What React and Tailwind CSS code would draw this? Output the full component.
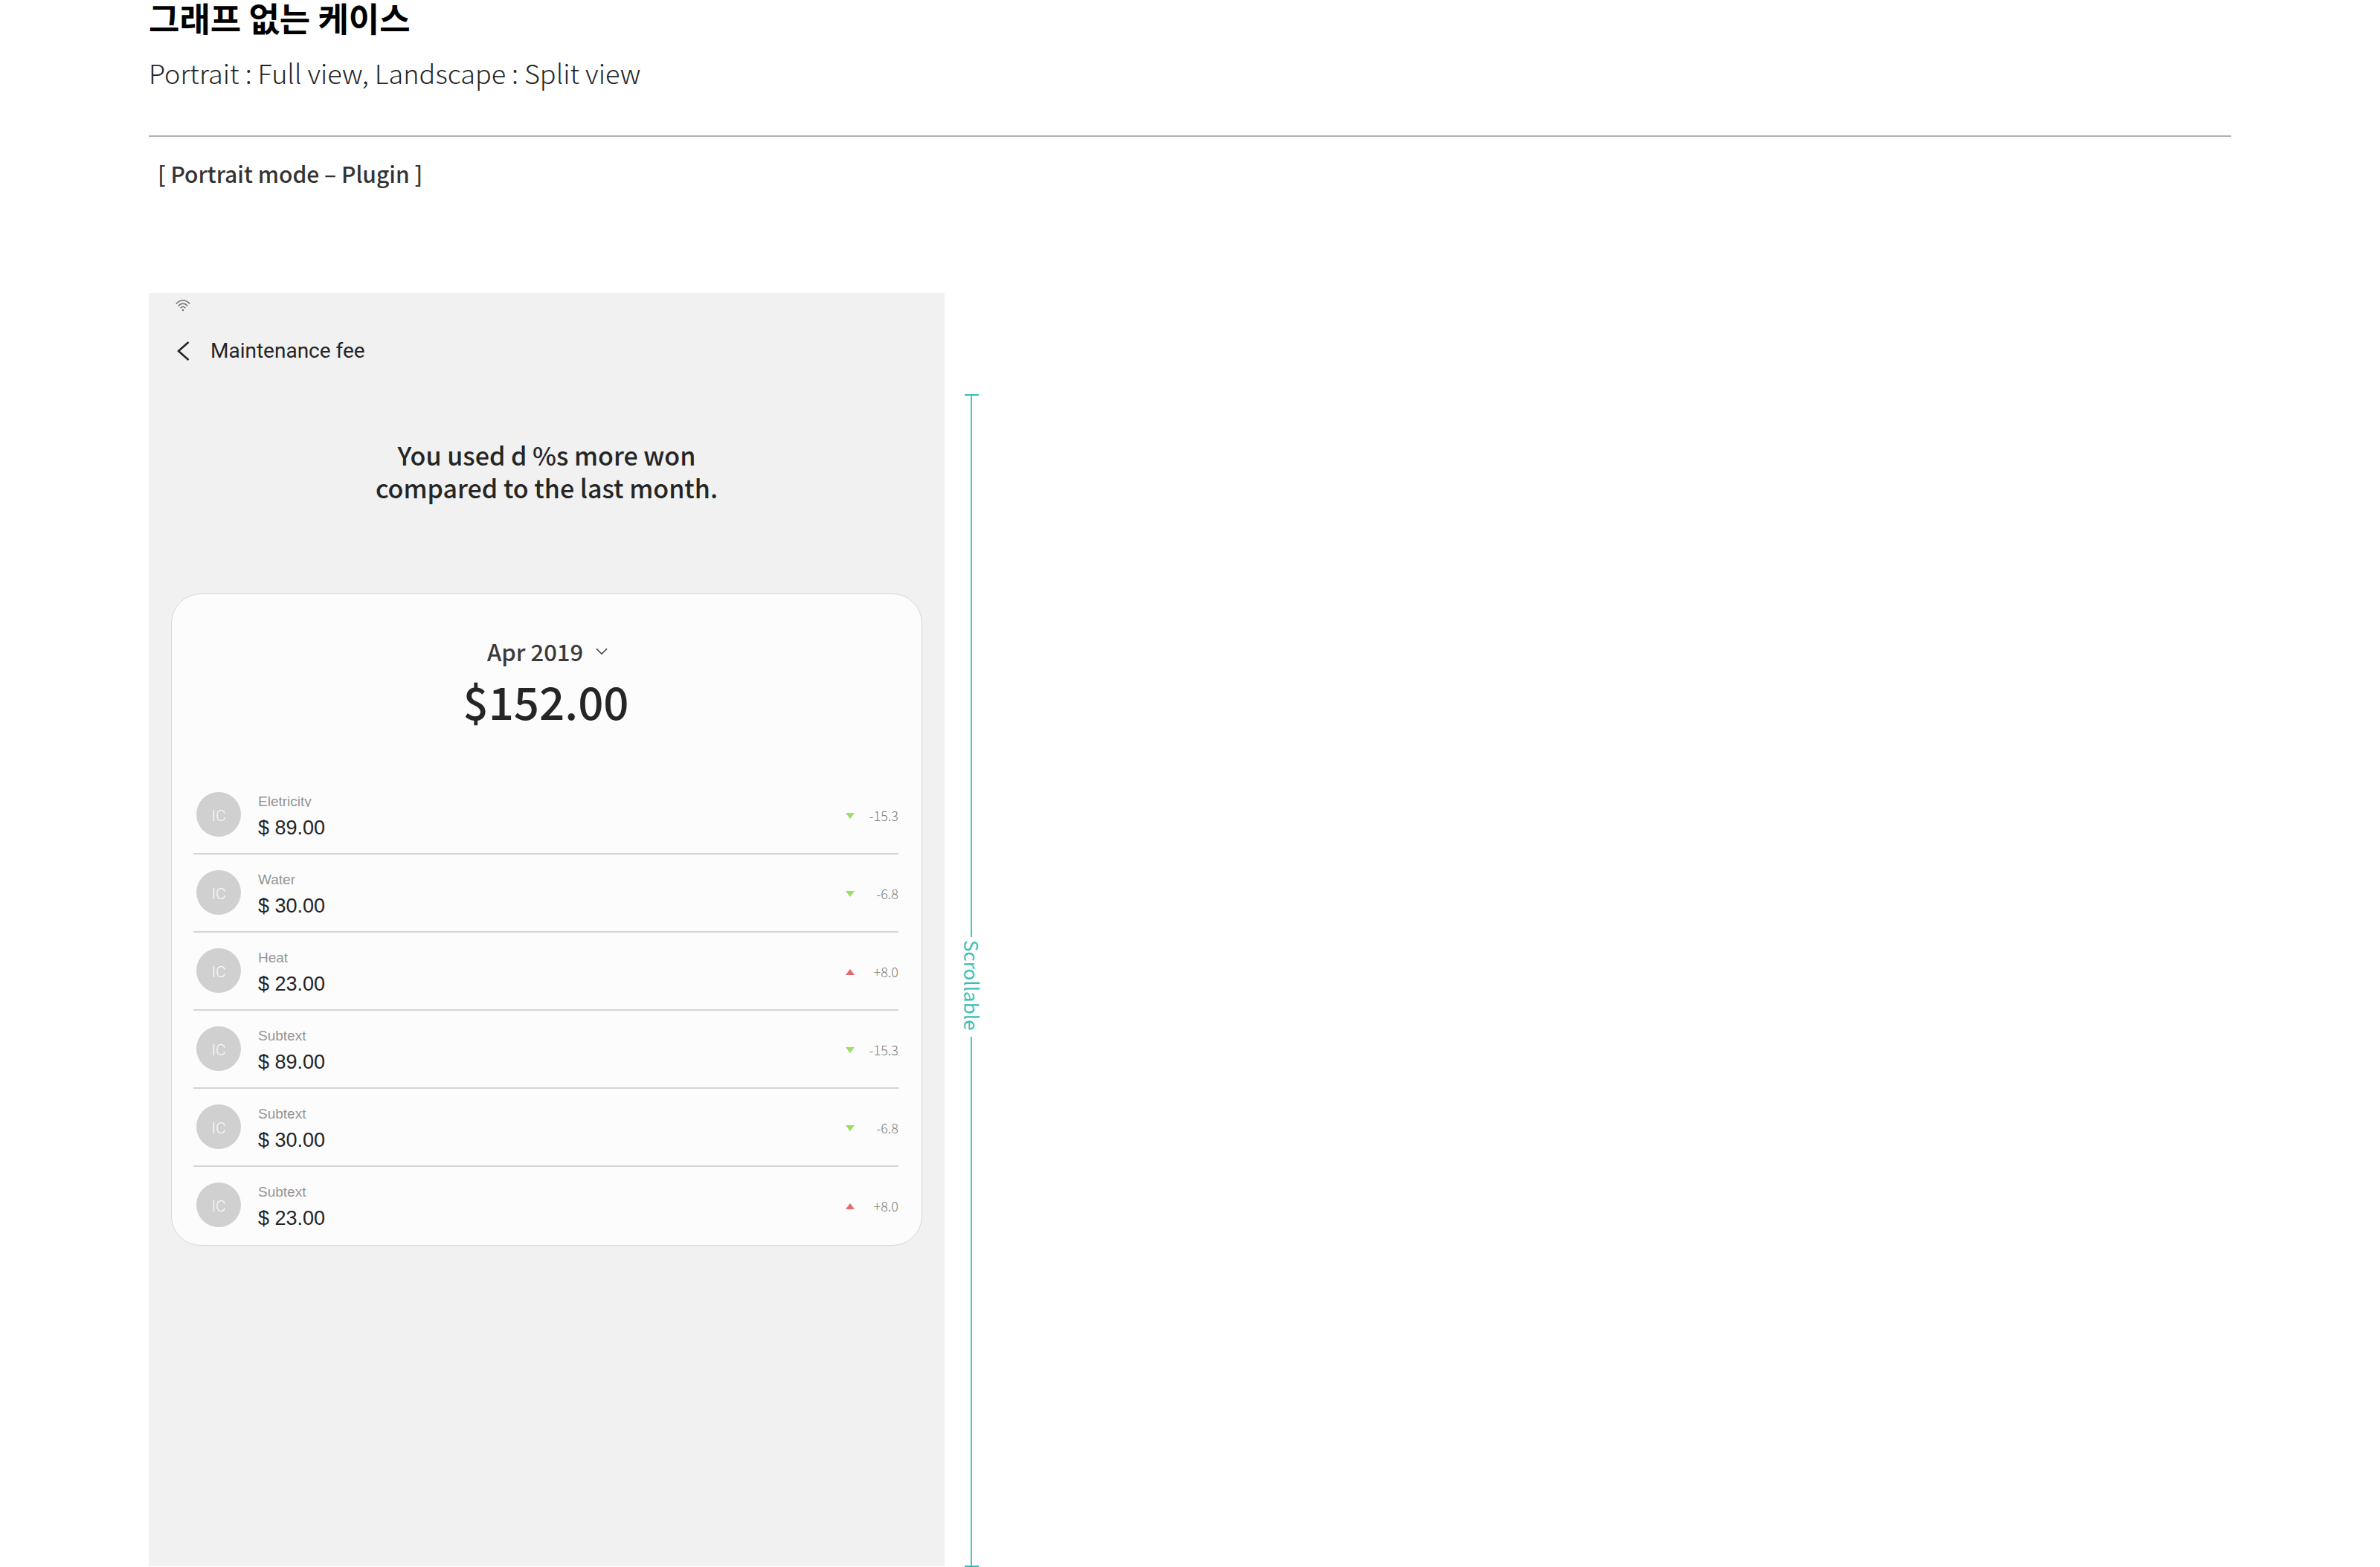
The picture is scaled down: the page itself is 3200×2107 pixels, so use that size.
const fees = [
  { label: "Eletricity", amount: "$ 89.00", change: "-15.3" },
  { label: "Water", amount: "$ 30.00", change: "-6.8" },
  { label: "Heat", amount: "$ 23.00", change: "+8.0" },
  { label: "Subtext", amount: "$ 89.00", change: "-15.3" },
  { label: "Subtext", amount: "$ 30.00", change: "-6.8" },
  { label: "Subtext", amount: "$ 23.00", change: "+8.0" },
];

function WifiIcon() {
  return (
    <svg className="block h-4 w-5" viewBox="0 0 20 16" fill="none" stroke="#737373" strokeWidth="1.5" aria-hidden="true">
      <path d="M.8 5.6C6-.4 14-.4 19.2 5.6" />
      <path d="M3.7 8.5C7.4 4.3 12.6 4.3 16.3 8.5" />
      <path d="M6.6 11.2C8.7 9 11.3 9 13.4 11.2" />
      <circle cx="10" cy="14" r="1.2" fill="#737373" stroke="none" />
    </svg>
  );
}

function Trend({ up }) {
  return (
    <svg className="mt-px block h-2 w-3" viewBox="0 0 12 8" aria-hidden="true">
      {up ? <path d="M0 8 6 0l6 8z" fill="#e76b6b" /> : <path d="M0 0h12L6 8z" fill="#98e060" />}
    </svg>
  );
}

function FeeRow({ label, amount, change }) {
  return (
    <li className="flex h-[105px] items-start border-b-2 border-[#d4d4d4] last:border-transparent">
      <span className="mt-[21px] ml-1 flex size-[60px] shrink-0 items-center justify-center rounded-full bg-[#d0d0d0] pt-1 font-['Roboto',sans-serif] text-[21px] leading-6 font-light text-[#fafafa]">
        IC
      </span>
      <span className="mt-5 ml-[23px] flex grow flex-col font-['Liberation_Sans',sans-serif]">
        <span className="h-[21px] overflow-hidden text-[19px] leading-7 text-[#949494]">{label}</span>
        <span className="mt-3 text-[27px] leading-8 text-[#252525]">{amount}</span>
      </span>
      <span className="mt-10 flex items-center">
        <Trend up={change.startsWith("+")} />
        <span className="w-[59px] text-right font-['Noto_Sans_CJK_KR',sans-serif] text-[18px] leading-6 font-light text-[#7d7d7d]">
          {change}
        </span>
      </span>
    </li>
  );
}

function ScrollGuide() {
  return (
    <div className="mt-[136px] flex w-[22px] flex-col items-center text-[#36bfb5]">
      <span className="h-0.5 w-[19px] bg-[#36bfb5]" />
      <span className="h-[728px] w-0.5 bg-[#4cc6bd]" />
      <span className="mt-1 mb-2 pl-0.5 font-['Noto_Sans_CJK_KR',sans-serif] text-[26px] leading-6 whitespace-nowrap [writing-mode:vertical-rl]">
        Scrollable
      </span>
      <span className="w-0.5 grow bg-[#4cc6bd]" />
      <span className="h-0.5 w-[19px] bg-[#36bfb5]" />
    </div>
  );
}

export default function App() {
  return (
    <main className="flex min-h-screen flex-col bg-white px-[200px] font-['Noto_Sans_CJK_KR',sans-serif]">
      <header className="flex h-[184px] flex-col border-b-2 border-[#b0b0b0]">
        <h1 className="text-[45px] leading-[48px] font-bold text-black">그래프 없는 케이스</h1>
        <p className="mt-[23px] text-[36px] leading-[52px] font-light text-[#252525]">
          Portrait : Full view, Landscape : Split view
        </p>
      </header>
      <h2 className="mt-[27px] pl-3 text-[30px] leading-[44px] font-medium text-[#333333]">[ Portrait mode – Plugin ]</h2>

      <div className="mt-[139px] flex grow items-stretch gap-[25px]">
        <section className="mb-px flex w-full max-w-[1070px] flex-col bg-[#f1f1f1] px-[30px]">
          <div className="pt-[9px] pl-[6px]">
            <WifiIcon />
          </div>
          <nav className="mt-[35px] flex items-center pl-2">
            <button type="button" aria-label="Back" className="block">
              <svg className="block h-7 w-[17px]" viewBox="0 0 17 28" fill="none" stroke="#252525" strokeWidth="2.6" aria-hidden="true">
                <path d="M15.5 2 2 14l13.5 12" />
              </svg>
            </button>
            <h3 className="ml-7 font-['Roboto',sans-serif] text-[28px] leading-9 text-[#252525]">Maintenance fee</h3>
          </nav>
          <p className="mt-[100px] text-center text-[34px] leading-[44px] font-medium text-[#252525]">
            You used d %s more won
            <br />
            compared to the last month.
          </p>

          <article className="mt-[120px] flex flex-col rounded-[40px] border border-[#d8d8d8] bg-[#fcfcfc] pr-[31px] pl-[29px]">
            <div className="mt-[53px] flex items-center justify-center gap-4 pl-1">
              <select
                aria-label="Month"
                className="appearance-none bg-transparent text-[31px] leading-[48px] font-medium text-[#3a3a3a]"
              >
                <option>Apr 2019</option>
              </select>
              <svg className="block h-2.5 w-4" viewBox="0 0 16 10" fill="none" stroke="#3a3a3a" strokeWidth="1.6" aria-hidden="true">
                <path d="m1 1.2 7 7 7-7" />
              </svg>
            </div>
            <strong className="mt-1 text-center text-[60px] leading-[76px] font-medium text-[#252525]">$152.00</strong>
            <ul className="mt-16">
              {fees.map((fee, i) => (
                <FeeRow key={i} {...fee} />
              ))}
            </ul>
          </article>
        </section>
        <ScrollGuide />
      </div>
    </main>
  );
}
